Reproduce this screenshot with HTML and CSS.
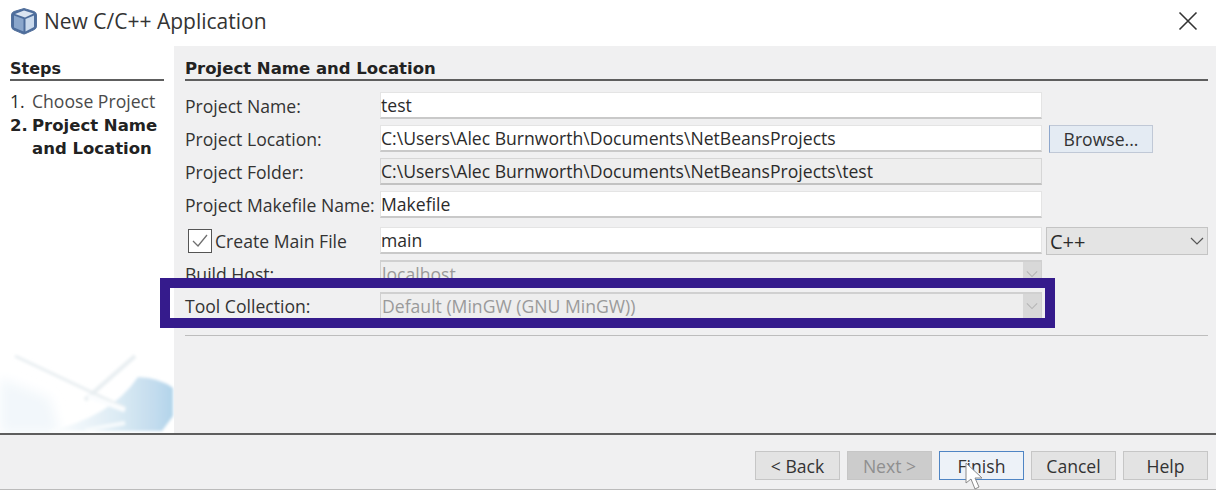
FILE: index.html
```html
<!DOCTYPE html>
<html lang="en">
<head>
    <meta charset="UTF-8">
    <title>New C/C++ Application</title>
    <link rel="stylesheet" href="styles.css">
</head>
<body>
    <div class="dialog">
        <header class="title-bar">
            <svg class="app-icon" width="28" height="28" viewBox="0 0 28 28">
                <path d="M14 1.500 L24 4.500 Q26.500 5.500 26.500 8 L26.500 19 Q26.500 21.500 24.500 22.500 L15 26.800 Q14 27.200 13 26.800 L4 23 Q1.500 22 1.500 19 L1.500 8 Q1.500 5.500 4 4.500 Z" fill="#4d6d9c" stroke="#54719c" stroke-width="1"/>
                <path d="M14 3.500 L23.500 6.500 L15 10.500 L5 7 Z" fill="#dbe5f1"/>
                <path d="M4 8.500 L13.500 12 L13.500 24.500 L4 20.500 Z" fill="#8aa6cb"/>
                <path d="M15.500 12 L24 8.500 L24 20 L15.500 24.500 Z" fill="#c9d9ec"/>
            </svg>
            <span class="title-text">New C/C++ Application</span>
            <svg class="close-icon" width="20" height="20" viewBox="0 0 20 20">
                <path d="M1.500 1.500 L18.500 18.500 M18.500 1.500 L1.500 18.500" stroke="#333" stroke-width="1.600" fill="none"/>
            </svg>
        </header>

        <div class="content">
            <aside class="steps">
                <h2 class="steps-title">Steps</h2>
                <ol class="steps-list">
                    <li><span class="step-num">1.</span><span class="step-name">Choose Project</span></li>
                    <li class="current"><span class="step-num">2.</span><span class="step-name">Project Name and Location</span></li>
                </ol>
                <svg class="steps-art" width="174" height="95" viewBox="0 0 174 95">
                    <defs>
                        <linearGradient id="swoosh" x1="0" y1="0" x2="1" y2="0">
                            <stop offset="0" stop-color="#ffffff"/>
                            <stop offset="0.550" stop-color="#dcebf4"/>
                            <stop offset="0.850" stop-color="#c3dcee"/>
                            <stop offset="1" stop-color="#b2d4ea"/>
                        </linearGradient>
                        <filter id="soft"><feGaussianBlur stdDeviation="1.500"/></filter>
                        <filter id="softer"><feGaussianBlur stdDeviation="6"/></filter>
                    </defs>
                    <path d="M0 40 L50 60 L60 95 L0 95 Z" fill="#f2f7fb" filter="url(#softer)"/>
                    <g filter="url(#soft)">
                        <path d="M138 39 Q160 40 173 50 L173 78 L162 93 L48 93 Q110 80 138 39 Z" fill="url(#swoosh)"/>
                        <path d="M15 18 L125 70" stroke="#e8eef1" stroke-width="3"/>
                        <path d="M135 18 L85 62" stroke="#e8eef1" stroke-width="4"/>
                        <path d="M88 58 L125 72" stroke="#fbfdfe" stroke-width="5"/>
                        <path d="M85 92 L125 85" stroke="#f6fafc" stroke-width="4"/>
                    </g>
                </svg>
            </aside>

            <main class="panel">
                <h2 class="panel-title">Project Name and Location</h2>
                <div class="form-grid">
                    <label class="field-label">Project Name:</label>
                    <div class="input">test</div>
                    <div></div>

                    <label class="field-label">Project Location:</label>
                    <div class="input">C:\Users\Alec Burnworth\Documents\NetBeansProjects</div>
                    <button class="btn browse" type="button">Browse...</button>

                    <label class="field-label">Project Folder:</label>
                    <div class="input readonly">C:\Users\Alec Burnworth\Documents\NetBeansProjects\test</div>
                    <div></div>

                    <label class="field-label">Project Makefile Name:</label>
                    <div class="input">Makefile</div>
                    <div></div>

                    <label class="field-label check-label">
                        <span class="checkbox">
                            <svg width="22" height="22" viewBox="0 0 22 22"><path d="M4 11 L9 16 L18 5" stroke="#6f6f6f" stroke-width="1.300" fill="none"/></svg>
                        </span>
                        Create Main File
                    </label>
                    <div class="input">main</div>
                    <div class="select lang">C++
                        <svg class="chevron" width="14" height="8" viewBox="0 0 14 8"><path d="M1 1 L7 7 L13 1" stroke="#555" stroke-width="1.200" fill="none"/></svg>
                    </div>

                    <label class="field-label">Build Host:</label>
                    <div class="select disabled">localhost
                        <span class="drop-btn"><svg width="14" height="8" viewBox="0 0 14 8"><path d="M1 1 L7 7 L13 1" stroke="#b5b5b5" stroke-width="1.200" fill="none"/></svg></span>
                    </div>
                    <div></div>

                    <label class="field-label">Tool Collection:</label>
                    <div class="select disabled">Default (MinGW (GNU MinGW))
                        <span class="drop-btn"><svg width="14" height="8" viewBox="0 0 14 8"><path d="M1 1 L7 7 L13 1" stroke="#b5b5b5" stroke-width="1.200" fill="none"/></svg></span>
                    </div>
                    <div></div>
                </div>
                <hr class="panel-rule">
            </main>
        </div>

        <footer class="button-bar">
            <button class="btn" type="button">&lt; Back</button>
            <button class="btn off" type="button">Next &gt;</button>
            <button class="btn default" type="button">Finish</button>
            <button class="btn" type="button">Cancel</button>
            <button class="btn" type="button">Help</button>
        </footer>

        <!-- annotation drawn over the screenshot -->
        <div class="highlight"></div>
        <svg class="cursor" width="26" height="30" viewBox="0 0 26 30">
            <path d="M2 1 L2 21 L7 17 L11 27 L15 25 L11 16 L18 16 Z" fill="#fff" stroke="#8a8a8a" stroke-width="1"/>
        </svg>
    </div>
</body>
</html>
```

FILE: styles.css
```css
* {
    box-sizing: border-box;
}

html, body {
    margin: 0;
    padding: 0;
}

body {
    width: 1216px;
    height: 490px;
    overflow: hidden;
    background-color: #fff;
    font-family: 'Open Sans', 'Noto Sans', sans-serif;
    font-size: 17.600px;
    color: #2b2b2b;
}

.dialog {
    position: relative;
    width: 1216px;
    height: 490px;
    display: flex;
    flex-direction: column;
}

.title-bar {
    height: 46px;
    flex: none;
    display: flex;
    align-items: center;
    padding: 0 0 4px 10px;
    background-color: #fff;
}

.app-icon {
    flex: none;
}

.title-text {
    margin-left: 6px;
    font-size: 21px;
    color: #333;
}

.close-icon {
    margin-left: auto;
    margin-right: 18px;
}

.content {
    flex: 1;
    display: flex;
    min-height: 0;
    border-bottom: 2px solid #5e5e5e;
}

.steps {
    position: relative;
    width: 174px;
    flex: none;
    padding: 12px 10px 0 10px;
    background-color: #fff;
}

.steps-title {
    margin: 0;
    height: 23px;
    width: 154px;
    border-bottom: 2px solid #5e5e5e;
    font-family: 'DejaVu Sans', sans-serif;
    font-size: 16px;
    line-height: 21px;
    font-weight: bold;
    color: #222;
}

.steps-list {
    list-style: none;
    margin: 9px 0 0 0;
    padding: 0;
    line-height: 23px;
}

.steps-list li {
    display: flex;
}

.step-num {
    width: 22px;
    flex: none;
}

.step-name {
    color: #4a4a4a;
    white-space: nowrap;
}

.steps-list .current {
    margin-top: 1px;
    font-family: 'DejaVu Sans', sans-serif;
    font-size: 16.500px;
    font-weight: bold;
    color: #222;
}

.current .step-name {
    color: #222;
    white-space: normal;
}

.steps-art {
    position: absolute;
    left: 0;
    bottom: 0;
}

.panel {
    flex: 1;
    padding: 12px 8px 0 11px;
    background-color: #f0f0f1;
}

.panel-title {
    margin: 0;
    height: 23px;
    border-bottom: 2px solid #5e5e5e;
    font-family: 'DejaVu Sans', sans-serif;
    font-size: 16.500px;
    line-height: 21px;
    font-weight: bold;
    color: #222;
}

.form-grid {
    display: grid;
    grid-template-columns: 195px 662px 159px;
    grid-template-rows: 33px 33px 33px 36px 33px 32px 27px;
    align-items: start;
    margin-top: 11px;
}

.field-label {
    display: flex;
    align-items: center;
    height: 27px;
    white-space: nowrap;
    color: #333;
}

.check-label {
    padding-left: 3px;
}

.checkbox {
    width: 24px;
    height: 24px;
    flex: none;
    margin-right: 3px;
    border: 1px solid #555;
    background-color: #fff;
    display: flex;
    align-items: center;
    justify-content: center;
}

.input {
    height: 27px;
    display: flex;
    align-items: center;
    padding-left: 0;
    background-color: #fff;
    border: 1px solid #e4e4e4;
    border-bottom: 2px solid #c9c9c9;
    white-space: nowrap;
    color: #2b2b2b;
}

.input.readonly {
    background-color: #eeeeee;
    border-color: #d6d6d6;
    border-bottom-color: #c2c2c2;
}

.select {
    position: relative;
    height: 27px;
    display: flex;
    align-items: center;
    padding-left: 1px;
    border: 1px solid #c4c4c4;
    white-space: nowrap;
}

.select.lang {
    margin-left: 4px;
    width: 162px;
    height: 28px;
    padding-left: 3px;
    font-size: 20px;
    background-color: #e4e4e4;
}

.chevron {
    position: absolute;
    right: 3px;
    top: 9px;
}

.select.disabled {
    background-color: #eeeeee;
    color: #9a9a9a;
    border-color: #d0d0d0;
    border-top-width: 2px;
}

.drop-btn {
    position: absolute;
    right: 0;
    top: 0;
    bottom: 0;
    width: 18px;
    background-color: #d8d8d8;
    display: flex;
    align-items: center;
    justify-content: center;
}

.drop-btn svg {
    width: 12px;
}

.panel-rule {
    margin: 16px 0 0 0;
    border: none;
    border-top: 1px solid #bdbdbd;
}

.btn {
    height: 29px;
    padding: 0;
    font-family: inherit;
    font-size: 17.600px;
    color: #333;
    background-color: #e3e3e3;
    border: 1px solid #c6c6c6;
}

.browse {
    margin-left: 7px;
    width: 104px;
    height: 28px;
    background-color: #e4ebf3;
    border-color: #c0c8d6;
    border-left-color: #8da6cc;
}

.button-bar {
    height: 55px;
    flex: none;
    display: flex;
    justify-content: flex-end;
    align-items: flex-start;
    gap: 7px;
    padding: 16px 8px 0 0;
    background-color: #f0f0f1;
    border-bottom: 1px solid #bbb;
}

.button-bar .btn {
    width: 85px;
}

.btn.off {
    background-color: #cccccc;
    border-color: #c6c6c6;
    color: #8f8f8f;
}

.btn.default {
    background-color: #edf2f8;
    border: 1px solid #4f85c4;
}

.highlight {
    position: absolute;
    left: 160px;
    top: 278px;
    width: 895px;
    height: 50px;
    border: 10px solid #351b8c;
}

.cursor {
    position: absolute;
    left: 964px;
    top: 462px;
}
```
